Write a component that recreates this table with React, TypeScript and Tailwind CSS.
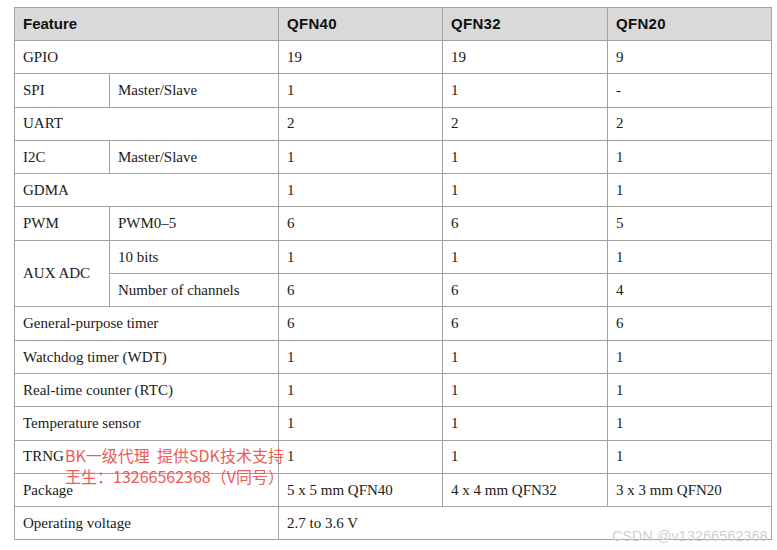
const serif = { fontFamily: '"Liberation Serif", "Times New Roman", serif' };

type Row = { cells: { text: string; colSpan?: number; rowSpan?: number }[] };

const rows: Row[] = [
  { cells: [{ text: 'GPIO', colSpan: 2 }, { text: '19' }, { text: '19' }, { text: '9' }] },
  { cells: [{ text: 'SPI' }, { text: 'Master/Slave' }, { text: '1' }, { text: '1' }, { text: '-' }] },
  { cells: [{ text: 'UART', colSpan: 2 }, { text: '2' }, { text: '2' }, { text: '2' }] },
  { cells: [{ text: 'I2C' }, { text: 'Master/Slave' }, { text: '1' }, { text: '1' }, { text: '1' }] },
  { cells: [{ text: 'GDMA', colSpan: 2 }, { text: '1' }, { text: '1' }, { text: '1' }] },
  { cells: [{ text: 'PWM' }, { text: 'PWM0–5' }, { text: '6' }, { text: '6' }, { text: '5' }] },
  { cells: [{ text: 'AUX ADC', rowSpan: 2 }, { text: '10 bits' }, { text: '1' }, { text: '1' }, { text: '1' }] },
  { cells: [{ text: 'Number of channels' }, { text: '6' }, { text: '6' }, { text: '4' }] },
  { cells: [{ text: 'General-purpose timer', colSpan: 2 }, { text: '6' }, { text: '6' }, { text: '6' }] },
  { cells: [{ text: 'Watchdog timer (WDT)', colSpan: 2 }, { text: '1' }, { text: '1' }, { text: '1' }] },
  { cells: [{ text: 'Real-time counter (RTC)', colSpan: 2 }, { text: '1' }, { text: '1' }, { text: '1' }] },
  { cells: [{ text: 'Temperature sensor', colSpan: 2 }, { text: '1' }, { text: '1' }, { text: '1' }] },
  { cells: [{ text: 'TRNG', colSpan: 2 }, { text: '1' }, { text: '1' }, { text: '1' }] },
  { cells: [{ text: 'Package', colSpan: 2 }, { text: '5 x 5 mm QFN40' }, { text: '4 x 4 mm QFN32' }, { text: '3 x 3 mm QFN20' }] },
  { cells: [{ text: 'Operating voltage', colSpan: 2 }, { text: '2.7 to 3.6 V', colSpan: 3 }] },
];

export default function App() {
  return (
    <div className="w-[777px] h-[550px] bg-white overflow-hidden pt-[7px] pl-[14px]">
      <div className="relative w-[757px]">
        <table className="w-[757px] table-fixed border-collapse text-[15px] text-[#1a1a1a]">
          <colgroup>
            <col className="w-[95px]" />
            <col className="w-[169px]" />
            <col className="w-[164px]" />
            <col className="w-[165px]" />
            <col className="w-[164px]" />
          </colgroup>
          <thead>
            <tr
              className="bg-[#d9d9d9] h-[33px] text-[15px] font-bold text-[#111]"
              style={{ fontFamily: '"Liberation Sans", Arial, sans-serif' }}
            >
              <th colSpan={2} className="border border-[#a3a3a3] text-left pl-2 font-bold">Feature</th>
              <th className="border border-[#a3a3a3] text-left pl-2 font-bold tracking-[0.3px]">QFN40</th>
              <th className="border border-[#a3a3a3] text-left pl-2 font-bold tracking-[0.3px]">QFN32</th>
              <th className="border border-[#a3a3a3] text-left pl-2 font-bold tracking-[0.3px]">QFN20</th>
            </tr>
          </thead>
          <tbody style={serif}>
            {rows.map((r, i) => (
              <tr key={i} className="h-[33.3px]">
                {r.cells.map((c, j) => (
                  <td
                    key={j}
                    colSpan={c.colSpan}
                    rowSpan={c.rowSpan}
                    className="border border-[#a3a3a3] pl-2 align-middle whitespace-nowrap"
                  >
                    {c.text}
                  </td>
                ))}
              </tr>
            ))}
          </tbody>
        </table>

        {/* red annotation stamped over the table */}
        <div
          className="absolute left-[51px] top-[438px] text-[16px] leading-[21px] text-[#ef5b57] whitespace-pre"
          style={{ fontFamily: '"Noto Sans CJK SC", "Noto Sans", sans-serif' }}
        >
          <div>{'BK一级代理  提供SDK技术支持'}</div>
          <div>王生：13266562368（V同号）</div>
        </div>

        <div
          className="absolute left-[598px] top-[519px] text-[14px] text-[#cfcfcf] tracking-[0.3px]"
          style={{ fontFamily: '"Liberation Sans", Arial, sans-serif' }}
        >
          CSDN @v13266562368
        </div>
      </div>
    </div>
  );
}
